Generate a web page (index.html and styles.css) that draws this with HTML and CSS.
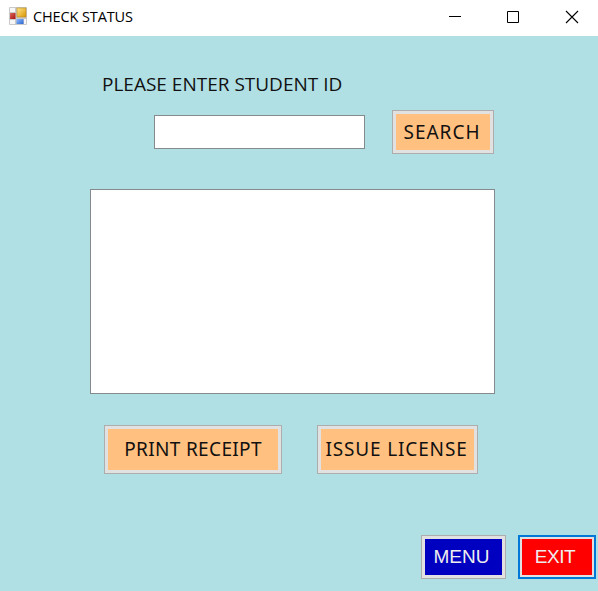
FILE: index.html
```html
<!DOCTYPE html>
<html lang="en">
<head>
<meta charset="utf-8">
<title>CHECK STATUS</title>
<link rel="stylesheet" href="styles.css">
</head>
<body>
<header class="titlebar">
  <svg class="app-icon" width="18" height="18" viewBox="0 0 18 18">
    <defs>
      <linearGradient id="gold" x2="1" y2="1"><stop stop-color="#ffe68a"/><stop offset="1" stop-color="#d99600"/></linearGradient>
      <linearGradient id="red" x2="1" y2="1"><stop stop-color="#d96a5c"/><stop offset="1" stop-color="#a80f0f"/></linearGradient>
      <linearGradient id="blue" x2="1" y2="1"><stop stop-color="#8dbbff"/><stop offset="1" stop-color="#2c66d2"/></linearGradient>
    </defs>
    <rect width="18" height="18" rx="1" fill="#c9c9c9"/>
    <path d="M1 1h5v4H1zM1 13h5v4H1zM15 12h2v5h-2z" fill="#f7f7f7"/>
    <rect x="1" y="6" width="5.500" height="6" fill="url(#red)"/>
    <rect x="8" y="1" width="9" height="9" fill="url(#gold)" stroke="#b88a20" stroke-width=".6"/>
    <rect x="7.500" y="12" width="7" height="5" fill="url(#blue)"/>
  </svg>
  <span class="caption">CHECK STATUS</span>
  <svg class="controls" width="130" height="14" viewBox="0 0 130 14" fill="none" stroke="#000">
    <path d="M0 6.500h12M58.500 1.500h11v11h-11z"/>
    <path d="M117 1l12 12M129 1L117 13" stroke-width="1.100"/>
  </svg>
</header>
<main class="form">
  <label class="prompt" for="student">PLEASE ENTER STUDENT ID</label>
  <div class="search-row">
    <input class="field" id="student" type="text">
    <button class="btn search">SEARCH</button>
  </div>
  <div class="results"></div>
  <div class="actions">
    <button class="btn print">PRINT RECEIPT</button>
    <button class="btn issue">ISSUE LICENSE</button>
  </div>
  <div class="nav">
    <button class="btn menu">MENU</button>
    <button class="btn exit">EXIT</button>
  </div>
</main>
</body>
</html>
```
FILE: styles.css
```css
* { box-sizing: border-box; }
body {
  margin: 0;
  height: 591px;
  overflow: hidden;
  background: #b0dfe4;
}
.titlebar {
  height: 36px;
  display: flex;
  align-items: center;
  padding: 0 19px 0 9px;
  background: #fff;
}
.app-icon { margin-top: -4px; }
.caption {
  margin-left: 6px;
  margin-top: -3px;
  font: 14.500px "Open Sans", sans-serif;
  letter-spacing: -0.120px;
  white-space: nowrap;
}
.controls { margin-left: auto; margin-top: -3px; }
.form { display: flex; flex-direction: column; }
.prompt {
  height: 26px;
  margin: 35px 0 0 102px;
  font: 19px/26px "Open Sans", sans-serif;
  color: #111;
  white-space: nowrap;
}
.search-row {
  display: flex;
  align-items: center;
  gap: 27px;
  height: 44px;
  margin: 13px 0 0 154px;
}
.field {
  width: 211px;
  height: 34px;
  border: 1px solid #858a8c;
  background: #fff;
  outline: none;
}
.btn {
  padding: 0;
  border: 1px solid #adadad;
  border-radius: 0;
  box-shadow: inset 0 0 0 3px #e1e1e1;
  background: #ffc080;
  color: #111;
  font: 19px/24px "Noto Sans", sans-serif;
  white-space: nowrap;
}
.search { width: 102px; height: 44px; padding-right: 2px; letter-spacing: 1px; }
.results {
  width: 405px;
  height: 205px;
  margin: 35px 0 0 90px;
  border: 1px solid #858a8c;
  background: #fff;
}
.actions { display: flex; gap: 35px; margin: 31px 0 0 104px; }
.actions .btn { height: 49px; padding-bottom: 1px; }
.print { width: 178px; letter-spacing: 0.350px; }
.issue { width: 161px; padding-right: 2px; letter-spacing: 0.850px; }
.nav { display: flex; gap: 12px; margin: 61px 0 0 421px; }
.nav .btn {
  height: 44px;
  padding-right: 4px;
  color: #eee;
  font-family: "Liberation Sans", sans-serif;
}
.menu { width: 85px; background: #0000c0; }
.nav .exit {
  width: 78px;
  border: 2px solid #0078d7;
  box-shadow: inset 0 0 0 2px #e1e1e1;
  background: #f00;
  letter-spacing: -0.400px;
}
```
